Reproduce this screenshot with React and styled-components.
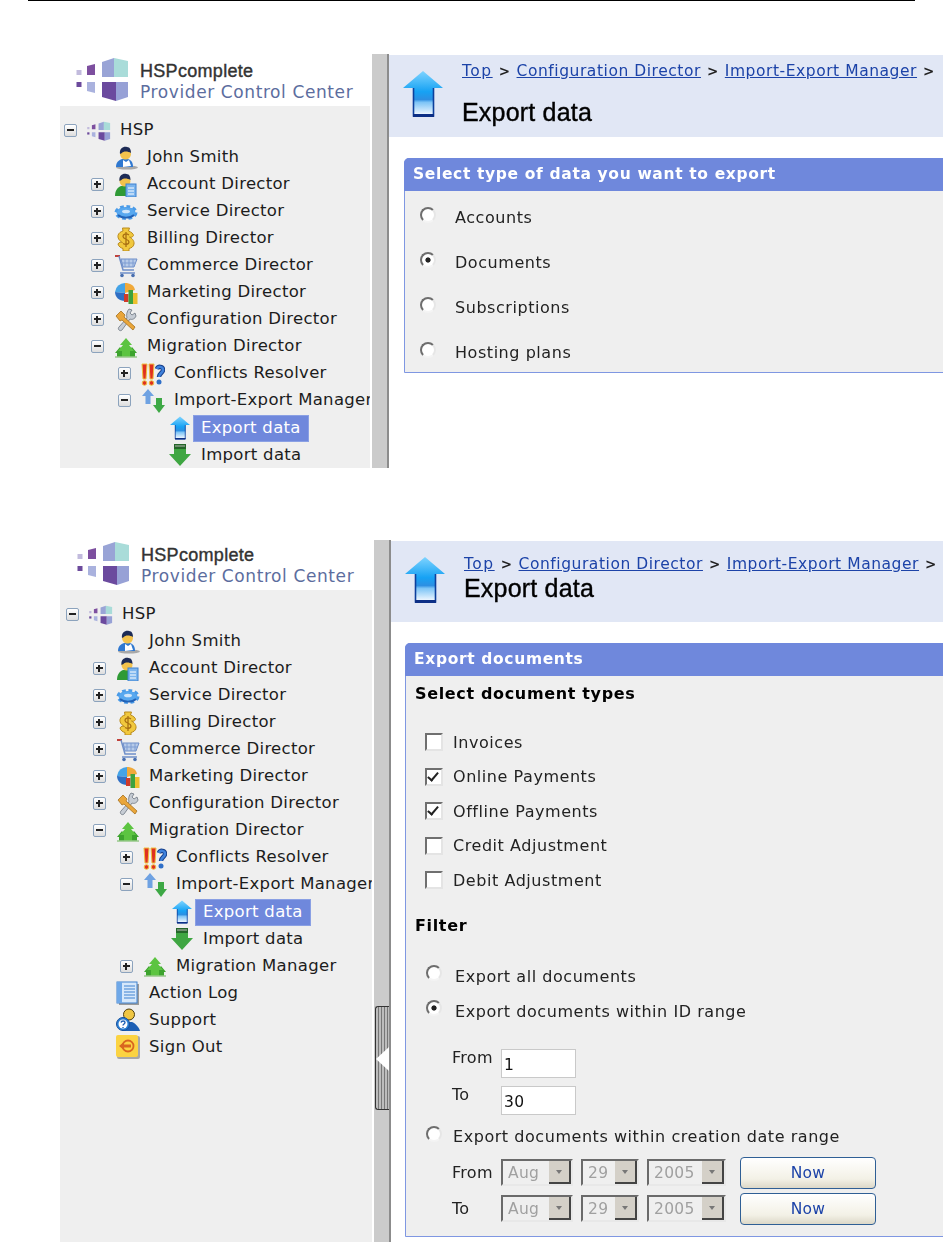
import React from "react";
import styled, { createGlobalStyle } from "styled-components";

const GlobalStyle = createGlobalStyle`
    html, body {
        margin: 0;
        padding: 0;
        background: #fff;
    }
    body {
        width: 943px;
        height: 1242px;
        overflow: hidden;
        font-family: "DejaVu Sans", Verdana, sans-serif;
    }
`;

/* ---------- drawings ---------- */

const LogoMark = ({ width = 54, height = 44 }) => (
    <svg width={width} height={height} viewBox="0 0 54 44">
        <rect x="0.5" y="13" width="5" height="5" fill="#c2bbdd" />
        <rect x="0.5" y="25" width="5" height="5" fill="#6c4a9c" />
        <path d="M11 9l8-2v11h-8z" fill="#7d4f9f" />
        <path d="M11 25h8v11l-8-2z" fill="#aab2de" />
        <path d="M26 5l12-4v19H26z" fill="#99a4d6" />
        <path d="M38 1l14 3v16H38z" fill="#a9dcd9" />
        <path d="M26 25h14v19l-14-4z" fill="#6b4a9e" />
        <path d="M40 25h12v15l-12 4z" fill="#97a1d6" />
    </svg>
);

const UserIcon = () => (
    <svg width="24" height="24" viewBox="0 0 24 24">
        <ellipse cx="13" cy="21.5" rx="11" ry="2" fill="#a8a8a8" />
        <path d="M2 21c0-5 3-7 6-8h6c3 1 5 3 5 8z" fill="#2f78d0" />
        <path d="M9 14l3 2 3-2 2 6-8 1z" fill="#fff" />
        <circle cx="11.5" cy="8" r="5.5" fill="#f3c24c" />
        <path d="M6 8c-1-6 4-8 7-7 3 0 4 3 4 6-3-2-8-2-9 0z" fill="#1d2b55" />
    </svg>
);

const AccountIcon = () => (
    <svg width="24" height="24" viewBox="0 0 24 24">
        <path d="M1 23c0-6 3-9 6-10h7v10z" fill="#2f9a35" />
        <circle cx="11" cy="8" r="5.5" fill="#f3c24c" />
        <path d="M5.5 8c-1-6 4-8 7-7 3 0 4 3 4 6-3-2-8-2-9 0z" fill="#1d2b55" />
        <rect x="12" y="11" width="10" height="13" fill="#7cb5ee" stroke="#3f82d0" />
        <path d="M14 15h6M14 18h6M14 21h6" stroke="#fff" />
    </svg>
);

const GearIcon = () => (
    <svg width="24" height="24" viewBox="0 0 24 24">
        <ellipse cx="12" cy="12.500" rx="9.500" ry="5.500" fill="#4a9be8" stroke="#4a9be8" strokeWidth="4" strokeDasharray="3.500 2.500" />
        <ellipse cx="12" cy="12.500" rx="9" ry="5" fill="#58a8ef" />
        <ellipse cx="12" cy="11.500" rx="4" ry="1.800" fill="#cfe5fa" />
        <path d="M4 15c4 3.500 12 3.500 16 0" stroke="#2262b6" strokeWidth="1.800" fill="none" />
    </svg>
);

const BillingIcon = () => (
    <svg width="24" height="24" viewBox="0 0 24 24">
        <path d="M8.500 1h7l-1 3c3 1 5 3 5 4.500-1 2-3 2-4 1.500 2 1 5 3.500 4.500 7-.5 3-3 4-5 4.500V24h-6v-2.500c-2-.5-4.500-2-5-4.500 1-2 3-2 4.500-1.500-2-1-5-3.500-4.500-7 .5-2.500 3-4 5-4.500z" fill="#f1c83d" stroke="#b98a1d" />
        <path d="M15 8c-3-2-6-1-6 1.500 0 3 6 2.500 6 5.500 0 2.500-3.500 3-6 1.500M12 5v15" stroke="#a86f12" strokeWidth="1.300" fill="none" />
    </svg>
);

const CartIcon = () => (
    <svg width="24" height="24" viewBox="0 0 24 24">
        <path d="M1 2h5" stroke="#c0423c" strokeWidth="2" />
        <path d="M5 2l4 14h11" stroke="#6f8fc9" strokeWidth="1.500" fill="none" />
        <path d="M7 5h16l-3 8H9z" fill="#b7cbe9" stroke="#6f8fc9" />
        <path d="M11 5v8M15 5v8M19 5v8M8 9h13" stroke="#7f9dd2" />
        <path d="M6 19h15" stroke="#6f8fc9" strokeWidth="1.500" />
        <circle cx="8" cy="21.500" r="1.800" fill="#496fb0" />
        <circle cx="19" cy="21.500" r="1.800" fill="#496fb0" />
    </svg>
);

const PieIcon = () => (
    <svg width="24" height="24" viewBox="0 0 24 24">
        <path d="M11 2A10 10 0 0 0 1 11l10 1z" fill="#45a3e6" />
        <path d="M11 2c5 0 9 2 10 7l-10 3z" fill="#f0a93a" />
        <path d="M1 11c0 5 4 9 10 9V12z" fill="#2f6fc4" />
        <rect x="10" y="13" width="4.500" height="8" fill="#cf3a2a" />
        <rect x="14.500" y="9" width="4.500" height="14" fill="#3da23e" />
        <rect x="19" y="12" width="4.500" height="11" fill="#edc02f" />
    </svg>
);

const ToolsIcon = () => (
    <svg width="24" height="24" viewBox="0 0 24 24">
        <path d="M15 1l3 1-2 3 2 2 3-2 1 3c-1 3-4 4-6 3L8 22c-2 2-5-1-3-3l8-9c-1-3 0-7 2-9z" fill="#c6ccd4" stroke="#6c7580" strokeWidth=".8" />
        <path d="M2 8l5-5 4 4-1 2 11 10-2 3L8 12l-2 1z" fill="#eaa63a" stroke="#a5701f" strokeWidth=".8" />
    </svg>
);

const MigrationIcon = () => (
    <svg width="24" height="24" viewBox="0 0 24 24">
        <path d="M6 12l5 6h-2v4H3v-4H1z" fill="#3da32e" />
        <path d="M18 12l5 6h-2v4h-6v-4h-2z" fill="#3da32e" />
        <path d="M12 3l6 7h-3l5 6h-4v6H8v-6H4l5-6H6z" fill="#5cc441" />
        <path d="M1 22h22" stroke="#97c98a" strokeWidth="1.500" />
    </svg>
);

const ConflictIcon = () => (
    <svg width="24" height="24" viewBox="0 0 24 24">
        <path d="M16 7c1-3 6-3 6 1 0 3-4 3-4 7" stroke="#173f8a" strokeWidth="4.500" fill="none" />
        <path d="M16 7c1-3 6-3 6 1 0 3-4 3-4 7" stroke="#3f82dc" strokeWidth="2.500" fill="none" />
        <circle cx="18" cy="20" r="2.500" fill="#2f6fc8" />
        <path d="M1 2h5l-1 15H2z" fill="#e03020" stroke="#f0c040" />
        <circle cx="3.500" cy="21" r="2.300" fill="#e03020" stroke="#f0c040" />
        <path d="M8 2h5l-1 15H9z" fill="#e03020" stroke="#f0c040" />
        <circle cx="10.500" cy="21" r="2.300" fill="#e03020" stroke="#f0c040" />
    </svg>
);

const ImportExportIcon = () => (
    <svg width="24" height="24" viewBox="0 0 24 24">
        <path d="M7 0l6 7H9.500v8h-5V7H1z" fill="#6fa2e2" />
        <path d="M15 9h6v7h3l-6 8-6-8h3z" fill="#3da845" />
    </svg>
);

const ExportIcon = ({ size = 20 }) => (
    <svg width={size} height={size * 1.2} viewBox="0 0 40 48">
        <defs>
            <linearGradient id="exportFill" x1="0" y1="0" x2="0" y2="1">
                <stop offset="0" stopColor="#7fd4ff" />
                <stop offset=".45" stopColor="#16a2f4" />
                <stop offset=".62" stopColor="#2d8fe2" />
                <stop offset=".68" stopColor="#7cc4f6" />
                <stop offset=".95" stopColor="#f2f8ff" />
            </linearGradient>
        </defs>
        <path d="M20 1l20 17H31v29H10V18H0z" fill="url(#exportFill)" />
        <path d="M10.500 18v28h20V18" fill="none" stroke="#0c3f9c" strokeWidth="1.600" />
        <path d="M10 44h21v3H10z" fill="#0c2f86" />
    </svg>
);

const ImportIcon = () => (
    <svg width="24" height="24" viewBox="0 0 24 24">
        <path d="M6 1h12v10h5L12 23 1 11h5z" fill="#3fa642" />
        <path d="M6 1h12v5H6z" fill="#24662a" />
        <path d="M7 2h10v2H7z" fill="#6f8f70" />
    </svg>
);

const LogIcon = () => (
    <svg width="24" height="24" viewBox="0 0 24 24">
        <rect x="3" y="3" width="20" height="21" fill="#9a9a9a" />
        <rect x="1" y="1" width="20" height="21" fill="#d6e8fb" stroke="#3f82d0" />
        <rect x="1" y="1" width="5" height="21" fill="#6fa8e8" />
        <path d="M8 5h11M8 8h11M8 11h11M8 14h11M8 17h11" stroke="#3f82d0" />
    </svg>
);

const SupportIcon = () => (
    <svg width="24" height="24" viewBox="0 0 24 24">
        <path d="M9 14h7c3 1 7 5 8 9H6z" fill="#1d5fb4" />
        <circle cx="13" cy="6.500" r="5.500" fill="#efc643" stroke="#4c3d10" />
        <circle cx="7" cy="16" r="6.500" fill="#2a7fd4" stroke="#154f9c" />
        <circle cx="7" cy="16" r="4.500" fill="#fff" />
        <path d="M5 14.500c.5-2 4-2 4 0 0 1.500-2 1.500-2 3M7 19v1" stroke="#1d5fb4" strokeWidth="1.400" fill="none" />
    </svg>
);

const SignOutIcon = () => (
    <svg width="24" height="24" viewBox="0 0 24 24">
        <rect x="1" y="1" width="23" height="23" rx="2" fill="#a8a8a8" />
        <rect x="0" y="0" width="22" height="22" rx="2" fill="#fbd342" />
        <circle cx="12" cy="11" r="5.500" fill="none" stroke="#d9661f" strokeWidth="1.800" />
        <path d="M3 11l5-4v2.500h7v3H8V15z" fill="#d9661f" />
    </svg>
);

const LogoSmall = () => <LogoMark width={24} height={20} />;

/* ---------- page parts ---------- */

const Page = styled.div`
    width: 943px;
    height: 1242px;
    overflow: hidden;
    display: flex;
    flex-direction: column;
`;

const TopRule = styled.hr`
    height: 1px;
    margin: 0 28px;
    border: 0;
    background: #000;
    flex: none;
`;

const Screen = styled.section`
    display: flex;
    flex: none;
    height: ${p => p.$height}px;
    margin-top: ${p => p.$top}px;
    margin-left: 60px;
    filter: blur(0.4px);
`;

const Sidebar = styled.aside`
    flex: none;
    width: ${p => p.$width}px;
    display: flex;
    flex-direction: column;
    overflow: hidden;
    background: #fff;
`;

const LogoBlock = styled.div`
    flex: none;
    height: ${p => p.$height}px;
    padding: ${p => p.$pad}px 0 0 ${p => 16 + p.$inset}px;
    box-sizing: border-box;
    display: flex;
    gap: 10px;
    background: #fff;
`;

const LogoText = styled.div`
    padding-top: 4px;
    display: flex;
    flex-direction: column;
    white-space: nowrap;
`;

const LogoTitle = styled.span`
    font-family: "Liberation Sans", Arial, sans-serif;
    font-size: 18px;
    line-height: 20px;
    letter-spacing: 0.3px;
    color: #333;
    -webkit-text-stroke: 0.4px #333;
`;

const LogoSub = styled.span`
    font-family: "DejaVu Sans", Verdana, sans-serif;
    font-size: 17px;
    line-height: 22px;
    color: #5c6d9e;
    letter-spacing: 0.6px;
`;

const Tree = styled.div`
    flex: 1;
    padding: 11px 0 0 ${p => p.$inset}px;
    margin-right: 2px;
    background: #efefef;
    overflow: hidden;
`;

const Row = styled.div`
    height: 27.05px;
    display: flex;
    align-items: center;
    padding-left: ${p => 4 + p.$depth * 27}px;
    white-space: nowrap;
`;

const ExpanderSlot = styled.span`
    flex: none;
    width: 23px;
    display: flex;
`;

const Expander = styled.span`
    width: 13px;
    height: 13px;
    box-sizing: border-box;
    border: 1px solid #8ca3bd;
    border-radius: 2px;
    background: linear-gradient(#fff, #ddd);
    position: relative;
    &::before {
        content: "";
        position: absolute;
        left: 2px;
        right: 2px;
        top: 4px;
        height: 2px;
        background: #222;
    }
    &::after {
        content: ${p => (p.$open ? "none" : '""')};
        position: absolute;
        top: 2px;
        bottom: 2px;
        left: 4px;
        width: 2px;
        background: #222;
    }
`;

const IconSlot = styled.span`
    flex: none;
    width: 24px;
    height: 24px;
    display: flex;
    align-items: center;
    justify-content: center;
`;

const Label = styled.span`
    margin-left: 1px;
    padding: 0 7px;
    height: 27px;
    line-height: 23px;
    box-sizing: border-box;
    font-size: 16.5px;
    letter-spacing: 0.3px;
    color: ${p => (p.$selected ? "#fff" : "#1c1c1c")};
    background: ${p => (p.$selected ? "#6f88dc" : "transparent")};
    border: 1px solid ${p => (p.$selected ? "#8aa0e4" : "transparent")};
`;

const Splitter = styled.div`
    flex: none;
    width: 15px;
    background: #cbcbcb;
    border-right: 2px solid #8c8c8c;
    position: relative;
`;

const SplitHandle = styled.div`
    position: absolute;
    top: ${p => p.$top}px;
    left: 1px;
    right: 0;
    height: 104px;
    box-sizing: border-box;
    border: 1px solid #333;
    border-right: 0;
    border-radius: 3px 0 0 3px;
    background: repeating-linear-gradient(90deg, #bdbdbd 0 2px, #777 2px 3px);
    &::after {
        content: "";
        position: absolute;
        right: 0;
        top: 40px;
        border-style: solid;
        border-width: 12px 13px 12px 0;
        border-color: transparent #fff transparent transparent;
    }
`;

const Main = styled.main`
    flex: 1;
    min-width: 0;
    padding-top: 1px;
    background: #fff;
`;

const Header = styled.header`
    height: ${p => p.$height}px;
    box-sizing: border-box;
    padding: 15px 0 0 14px;
    display: flex;
    gap: 19px;
    background: #e1e7f5;
    white-space: nowrap;
`;

const HeaderText = styled.div`
    display: flex;
    flex-direction: column;
    margin-top: ${p => p.$shift}px;
    gap: ${p => p.$gap}px;
`;

const Crumbs = styled.div`
    display: flex;
    align-items: center;
    gap: 6px;
    font-size: 15.5px;
    line-height: 17px;
    letter-spacing: 0.55px;
    color: #222;
`;

const Crumb = styled.a`
    color: #1c43a8;
    text-decoration: underline;
    letter-spacing: ${p => (p.$wide ? "1.5px" : "inherit")};
`;

const CrumbSep = styled.span`
    font-size: 13.5px;
    font-weight: 700;
`;

const Title = styled.h1`
    margin: 0;
    font-family: "Liberation Sans", Arial, sans-serif;
    font-size: 25px;
    line-height: 26px;
    letter-spacing: 0.2px;
    font-weight: 400;
    color: #000;
    -webkit-text-stroke: 0.4px #000;
`;

const Panel = styled.div`
    margin: 21px -10px 0 ${p => p.$left}px;
    height: ${p => p.$height}px;
    box-sizing: border-box;
    border: 1px solid #7f97e2;
    border-top-left-radius: 5px;
    background: #efefef;
    display: flex;
    flex-direction: column;
`;

const PanelTitle = styled.div`
    flex: none;
    height: 33px;
    line-height: 33px;
    margin: -1px -1px 0;
    padding-left: 9px;
    border-top-left-radius: 5px;
    background: #6f88dc;
    color: #fff;
    font-size: 15.5px;
    font-weight: 700;
    letter-spacing: 0.65px;
`;

const RadioList = styled.div`
    display: flex;
    flex-direction: column;
    padding: 4px 0 0 15px;
`;

const OptionRow = styled.label`
    height: ${p => p.$height}px;
    display: flex;
    align-items: center;
    gap: ${p => p.$gap}px;
    font-size: 16px;
    letter-spacing: 0.55px;
    color: #222;
    white-space: nowrap;
`;

const Radio = styled.input.attrs({ type: "radio", readOnly: true })`
    appearance: none;
    flex: none;
    width: 16px;
    height: 16px;
    margin: -6px 0 0;
    box-sizing: border-box;
    border-radius: 50%;
    border: 2px solid;
    border-color: #6e6e6e #e6e6e6 #f4f4f4 #6e6e6e;
    background: #fff;
    &:checked {
        background: radial-gradient(circle, #222 0 2.2px, #fff 3px);
    }
`;

const Check = styled.input.attrs({ type: "checkbox", readOnly: true })`
    appearance: none;
    flex: none;
    position: relative;
    width: 18px;
    height: 18px;
    margin: 0;
    box-sizing: border-box;
    border: 2px solid;
    border-color: #6f6f6f #e4e4e4 #e4e4e4 #6f6f6f;
    background: #fff;
    &:checked::after {
        content: "";
        position: absolute;
        left: 3px;
        top: 0;
        width: 4px;
        height: 9px;
        border: solid #222;
        border-width: 0 2.5px 2.5px 0;
        transform: rotate(40deg);
    }
`;

const Section = styled.h2`
    margin: 0;
    padding: ${p => p.$top}px 0 0 9px;
    font-size: 16px;
    font-weight: 700;
    line-height: 18px;
    color: #000;
    letter-spacing: 0.65px;
`;

const CheckList = styled.div`
    display: flex;
    flex-direction: column;
    padding: 22px 0 0 19px;
`;

const FilterList = styled.div`
    display: flex;
    flex-direction: column;
    padding: 24px 0 0 20px;
`;

const FieldRow = styled.div`
    height: ${p => p.$height}px;
    margin-top: ${p => p.$top || 0}px;
    display: flex;
    align-items: center;
    padding-left: 26px;
    font-size: 16px;
    letter-spacing: 0.3px;
    color: #222;
`;

const FieldLabel = styled.span`
    flex: none;
    width: 49px;
    margin-top: ${p => p.$lift || 0}px;
`;

const TextInput = styled.input`
    width: 75px;
    height: 29px;
    box-sizing: border-box;
    padding: 3px 0 0 2px;
    border: 1px solid #c9c9c9;
    background: #fff;
    font-family: inherit;
    font-size: 15.5px;
    letter-spacing: 0.3px;
    color: #111;
    outline: 0;
`;

const SelectBox = styled.div`
    flex: none;
    width: ${p => p.$width}px;
    height: 27px;
    margin-right: 8px;
    box-sizing: border-box;
    display: flex;
    align-items: center;
    justify-content: space-between;
    padding-left: 5px;
    border: 2px solid;
    border-color: #6a6a6a #e8e8e8 #e8e8e8 #6a6a6a;
    font-size: 15.5px;
    letter-spacing: 0.3px;
    color: #a0a0a0;
    background: #efefef;
`;

const SelectArrow = styled.span`
    flex: none;
    width: 22px;
    height: 23px;
    background: #d4d0c8;
    border-right: 2px solid #444;
    border-bottom: 2px solid #444;
    box-sizing: border-box;
    display: flex;
    align-items: center;
    justify-content: center;
    &::after {
        content: "";
        border-style: solid;
        border-width: 4px 3.5px 0;
        border-color: #777 transparent transparent;
    }
`;

const NowButton = styled.button`
    flex: none;
    width: 136px;
    height: 32px;
    margin-left: 6px;
    padding: 0;
    border: 1px solid #2f5f95;
    border-radius: 4px;
    background: linear-gradient(#fff, #f3f1e6 70%, #dcd8c8);
    font-family: inherit;
    font-size: 15.5px;
    letter-spacing: 0.3px;
    color: #1c43a8;
`;

/* ---------- data ---------- */

const directors = [
    { name: "Account Director", icon: AccountIcon },
    { name: "Service Director", icon: GearIcon },
    { name: "Billing Director", icon: BillingIcon },
    { name: "Commerce Director", icon: CartIcon },
    { name: "Marketing Director", icon: PieIcon },
    { name: "Configuration Director", icon: ToolsIcon },
];

const TreeRow = ({ depth, expander, icon: Icon, selected, children }) => (
    <Row $depth={depth}>
        <ExpanderSlot>
            {expander && <Expander $open={expander === "open"} />}
        </ExpanderSlot>
        <IconSlot><Icon /></IconSlot>
        <Label $selected={selected}>{children}</Label>
    </Row>
);

const NavTree = ({ full, inset }) => (
    <Tree $inset={inset}>
        <TreeRow depth={0} expander="open" icon={LogoSmall}>HSP</TreeRow>
        <TreeRow depth={1} icon={UserIcon}>John Smith</TreeRow>
        {directors.map(elem => (
            <TreeRow key={elem.name} depth={1} expander="closed" icon={elem.icon}>{elem.name}</TreeRow>
        ))}
        <TreeRow depth={1} expander="open" icon={MigrationIcon}>Migration Director</TreeRow>
        <TreeRow depth={2} expander="closed" icon={ConflictIcon}>Conflicts Resolver</TreeRow>
        <TreeRow depth={2} expander="open" icon={ImportExportIcon}>Import-Export Manager</TreeRow>
        <TreeRow depth={3} icon={ExportIcon} selected>Export data</TreeRow>
        <TreeRow depth={3} icon={ImportIcon}>Import data</TreeRow>
        {full && (
            <>
                <TreeRow depth={2} expander="closed" icon={MigrationIcon}>Migration Manager</TreeRow>
                <TreeRow depth={1} icon={LogIcon}>Action Log</TreeRow>
                <TreeRow depth={1} icon={SupportIcon}>Support</TreeRow>
                <TreeRow depth={1} icon={SignOutIcon}>Sign Out</TreeRow>
            </>
        )}
    </Tree>
);

const Logo = ({ height, pad, inset }) => (
    <LogoBlock $height={height} $pad={pad} $inset={inset}>
        <LogoMark />
        <LogoText>
            <LogoTitle>HSPcomplete</LogoTitle>
            <LogoSub>Provider Control Center</LogoSub>
        </LogoText>
    </LogoBlock>
);

const PageHeader = ({ height, gap, shift }) => (
    <Header $height={height}>
        <ExportIcon size={40} />
        <HeaderText $gap={gap} $shift={shift}>
            <Crumbs>
                <Crumb $wide>Top</Crumb>
                <CrumbSep>&gt;</CrumbSep>
                <Crumb>Configuration Director</Crumb>
                <CrumbSep>&gt;</CrumbSep>
                <Crumb>Import-Export Manager</Crumb>
                <CrumbSep>&gt;</CrumbSep>
            </Crumbs>
            <Title>Export data</Title>
        </HeaderText>
    </Header>
);

const DateRow = ({ label }) => (
    <FieldRow $height={36}>
        <FieldLabel>{label}</FieldLabel>
        <SelectBox $width={72}>Aug<SelectArrow /></SelectBox>
        <SelectBox $width={58}>29<SelectArrow /></SelectBox>
        <SelectBox $width={79}>2005<SelectArrow /></SelectBox>
        <NowButton type="button">Now</NowButton>
    </FieldRow>
);

function App() {
    const dataTypes = ["Accounts", "Documents", "Subscriptions", "Hosting plans"];
    const docTypes = [
        ["Invoices", false],
        ["Online Payments", true],
        ["Offline Payments", true],
        ["Credit Adjustment", false],
        ["Debit Adjustment", false],
    ];

    return (
        <Page>
            <GlobalStyle />
            <TopRule />

            <Screen $top={53} $height={414}>
                <Sidebar $width={312}>
                    <Logo height={52} pad={3} inset={0} />
                    <NavTree inset={0} />
                </Sidebar>
                <Splitter />
                <Main>
                    <PageHeader height={82} gap={19} shift={-7} />
                    <Panel $left={15} $height={215}>
                        <PanelTitle>Select type of data you want to export</PanelTitle>
                        <RadioList>
                            {dataTypes.map(elem => (
                                <OptionRow key={elem} $height={45} $gap={19}>
                                    <Radio name="dataType" defaultChecked={elem === "Documents"} />
                                    {elem}
                                </OptionRow>
                            ))}
                        </RadioList>
                    </Panel>
                </Main>
            </Screen>

            <Screen $top={72} $height={702}>
                <Sidebar $width={314}>
                    <Logo height={50} pad={1} inset={1} />
                    <NavTree full inset={2} />
                </Sidebar>
                <Splitter>
                    <SplitHandle $top={466} />
                </Splitter>
                <Main>
                    <PageHeader height={81} gap={2} shift={0} />
                    <Panel $left={14} $height={594}>
                        <PanelTitle>Export documents</PanelTitle>
                        <Section $top={9}>Select document types</Section>
                        <CheckList>
                            {docTypes.map(elem => (
                                <OptionRow key={elem[0]} $height={34.5} $gap={10}>
                                    <Check defaultChecked={elem[1]} />
                                    {elem[0]}
                                </OptionRow>
                            ))}
                        </CheckList>
                        <Section $top={19}>Filter</Section>
                        <FilterList>
                            <OptionRow $height={35} $gap={13}>
                                <Radio name="filter" />
                                Export all documents
                            </OptionRow>
                            <OptionRow $height={35} $gap={13}>
                                <Radio name="filter" defaultChecked />
                                Export documents within ID range
                            </OptionRow>
                            <FieldRow $height={37} $top={16}>
                                <FieldLabel $lift={-12}>From</FieldLabel>
                                <TextInput defaultValue="1" />
                            </FieldRow>
                            <FieldRow $height={37}>
                                <FieldLabel $lift={-12}>To</FieldLabel>
                                <TextInput defaultValue="30" />
                            </FieldRow>
                            <OptionRow $height={36} $gap={11}>
                                <Radio name="filter" />
                                Export documents within creation date range
                            </OptionRow>
                            <DateRow label="From" />
                            <DateRow label="To" />
                        </FilterList>
                    </Panel>
                </Main>
            </Screen>
        </Page>
    );
}

export default App;
